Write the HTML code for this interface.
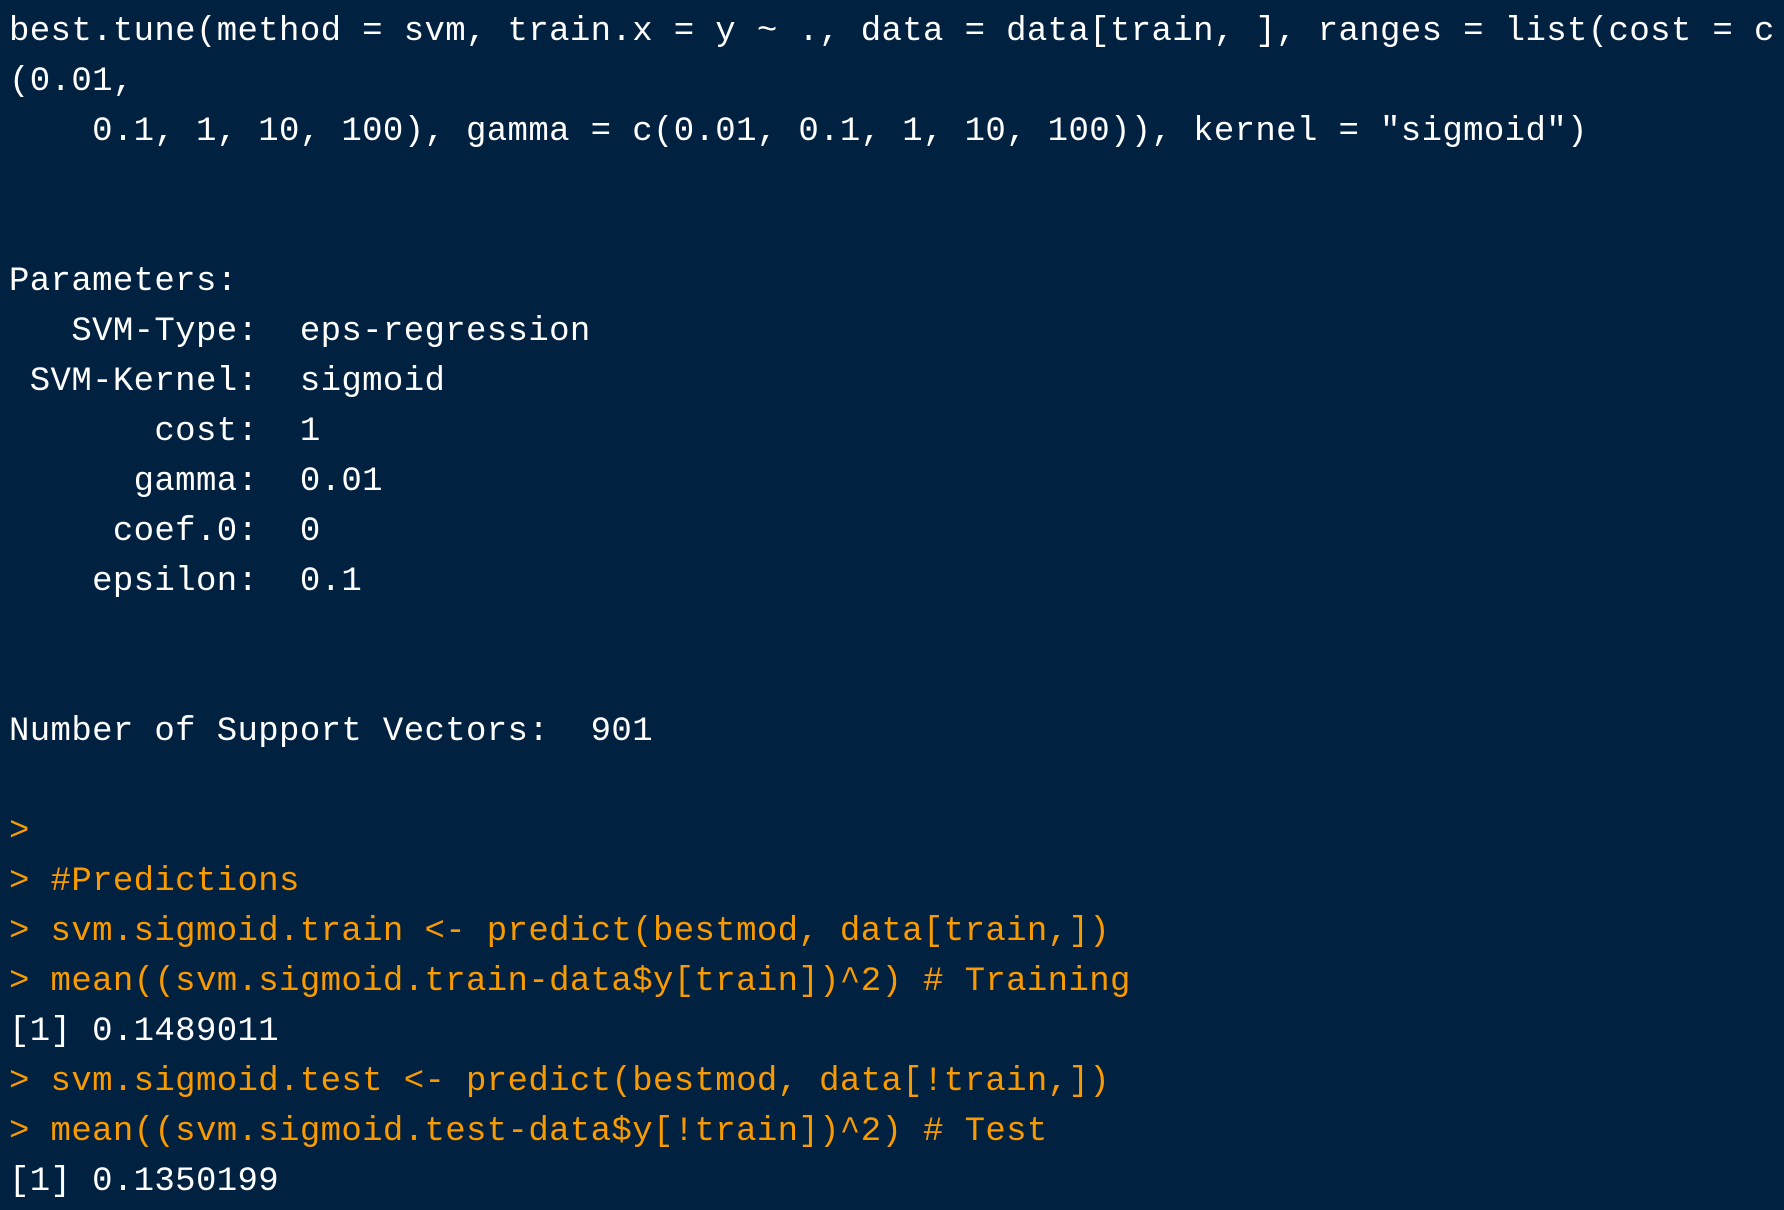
<!DOCTYPE html>
<html><head><meta charset="utf-8"><style>
html,body{margin:0;padding:0;background:#012141;width:1784px;height:1210px;overflow:hidden}
pre{margin:0;padding:7px 0 0 9px;font-family:"Liberation Mono","DejaVu Sans Mono",monospace;font-size:34px;letter-spacing:0.37px;line-height:50px;color:#ffffff;white-space:pre}
.o{color:#f99b00}
</style></head><body><pre>best.tune(method = svm, train.x = y ~ ., data = data[train, ], ranges = list(cost = c
(0.01,
    0.1, 1, 10, 100), gamma = c(0.01, 0.1, 1, 10, 100)), kernel = "sigmoid")


Parameters:
   SVM-Type:  eps-regression
 SVM-Kernel:  sigmoid
       cost:  1
      gamma:  0.01
     coef.0:  0
    epsilon:  0.1


Number of Support Vectors:  901

<span class="o">&gt;</span>
<span class="o">&gt; #Predictions</span>
<span class="o">&gt; svm.sigmoid.train &lt;- predict(bestmod, data[train,])</span>
<span class="o">&gt; mean((svm.sigmoid.train-data$y[train])^2) # Training</span>
[1] 0.1489011
<span class="o">&gt; svm.sigmoid.test &lt;- predict(bestmod, data[!train,])</span>
<span class="o">&gt; mean((svm.sigmoid.test-data$y[!train])^2) # Test</span>
[1] 0.1350199</pre></body></html>
